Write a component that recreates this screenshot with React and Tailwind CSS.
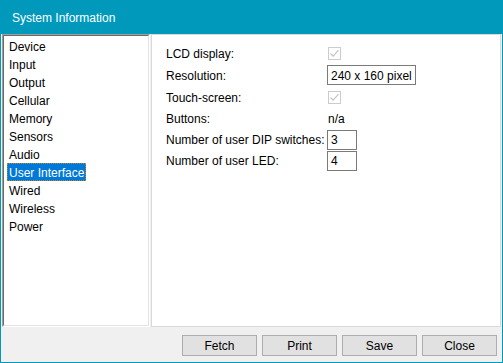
import React from "react";

const items = ["Device","Input","Output","Cellular","Memory","Sensors","Audio","User Interface","Wired","Wireless","Power"];

function Check() {
  return (
    <div className="w-[13px] h-[13px] ml-[1px] border border-[#cccccc] bg-white flex items-center justify-center">
      <svg width="11" height="11" viewBox="0 0 11 11">
        <path d="M1.5 5.5 L4.2 8.2 L9.5 2.2" fill="none" stroke="#c4c4c4" strokeWidth="1.2" />
      </svg>
    </div>
  );
}

function Field({ w, children }) {
  return (
    <div className={`${w} h-[20px] border border-[#7a7a7a] bg-white flex items-center pl-[3px] pt-[1px] text-black`}>
      {children}
    </div>
  );
}

export default function App() {
  return (
    <div
      className="w-[503px] h-[363px] bg-[#0099bc] flex flex-col px-[1px] pb-[1px] text-[12px] text-black"
      style={{ fontFamily: '"Liberation Sans", Arial, sans-serif' }}
    >
      <div className="h-[34px] flex items-center pl-[11px] pt-[1px] text-white text-[12px] shrink-0">System Information</div>
      <div className="flex-1 bg-[#f0f0f0] flex flex-col pl-[1px]">
        <div className="flex h-[293px] gap-[1px]">
          <div className="w-[148px] h-full border-t border-l border-[#a0a0a0] border-r-white border-b-white border-r border-b">
            <div className="h-full border-t border-l border-[#696969] border-r border-b border-r-[#e3e3e3] border-b-[#e3e3e3] bg-white pt-[1px]">
              {items.map((it) => (
                <div key={it} className="h-[18px] flex items-center pl-[3px]">
                  {it === "User Interface" ? (
                    <span className="h-[18px] flex items-center px-[1px] pt-[1px] bg-[#0078d7] text-white border border-dotted border-[#b58a2a]">{it}</span>
                  ) : (
                    <span className="px-[2px] pt-[1px]">{it}</span>
                  )}
                </div>
              ))}
            </div>
          </div>
          <div className="w-[350px] h-full bg-white border border-[#d9d9d9] pl-[14px] pt-[7px]">
            <div className="grid grid-cols-[161px_auto]">
              <div className="h-[22px] flex items-center pt-[1px]">LCD display:</div>
              <div className="h-[22px] flex items-center"><Check /></div>
              <div className="h-[22px] flex items-center pt-[1px]">Resolution:</div>
              <div className="h-[22px] flex items-center"><Field w="w-[89px]">240 x 160 pixel</Field></div>
              <div className="h-[22px] flex items-center pt-[1px]">Touch-screen:</div>
              <div className="h-[22px] flex items-center"><Check /></div>
              <div className="h-[21px] flex items-center pt-[1px]">Buttons:</div>
              <div className="h-[21px] flex items-center pl-[1px] pt-[1px]">n/a</div>
              <div className="h-[21px] flex items-center pt-[1px]">Number of user DIP switches:</div>
              <div className="h-[21px] flex items-center"><Field w="w-[30px]">3</Field></div>
              <div className="h-[21px] flex items-center pt-[1px]">Number of user LED:</div>
              <div className="h-[21px] flex items-center"><Field w="w-[30px]">4</Field></div>
            </div>
          </div>
        </div>
        <div className="flex justify-end gap-[5px] mt-[8px] pr-[5px]">
          {["Fetch","Print","Save","Close"].map((b) => (
            <div key={b} className="w-[75px] h-[21px] bg-[#e1e1e1] border border-[#adadad] flex items-center justify-center">{b}</div>
          ))}
        </div>
      </div>
    </div>
  );
}
